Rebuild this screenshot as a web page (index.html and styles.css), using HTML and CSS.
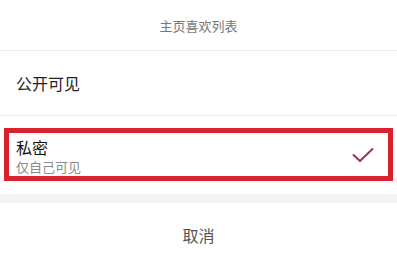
FILE: index.html
```html
<!DOCTYPE html>
<html lang="zh-CN">
<head>
    <meta charset="UTF-8">
    <meta name="viewport" content="width=device-width, initial-scale=1.0">
    <title>主页喜欢列表</title>
    <link rel="stylesheet" href="styles.css">
</head>
<body>
    <div class="sheet">
        <div class="sheet-title">主页喜欢列表</div>
        <div class="option option-public">公开可见</div>
        <div class="option option-private">
            <div class="option-text">
                <div class="option-name">私密</div>
                <div class="option-desc">仅自己可见</div>
            </div>
            <svg class="check" width="22" height="16" viewBox="0 0 22 16">
                <polyline points="1.5,8 8,14 20.5,2" fill="none" stroke="#9c2f58" stroke-width="2" stroke-linecap="round" stroke-linejoin="round"/>
            </svg>
            <!-- red highlight drawn over the selected row -->
            <div class="highlight"></div>
        </div>
        <div class="gap"></div>
        <div class="cancel">取消</div>
    </div>
</body>
</html>
```

FILE: styles.css
```css
body {
    margin: 0;
    padding: 0;
    background-color: #fff;
    font-family: "Noto Sans CJK SC", "Noto Sans", sans-serif;
}

.sheet {
    width: 397px;
    height: 266px;
    overflow: hidden;
    background-color: #fff;
}

.sheet-title {
    height: 50px;
    line-height: 52px;
    text-align: center;
    font-size: 13px;
    color: #777;
    border-bottom: 1px solid #ececec;
}

.option {
    padding-left: 16px;
}

.option-public {
    height: 64px;
    line-height: 64px;
    font-size: 16px;
    color: #222;
    border-bottom: 1px solid #eeeeee;
}

.option-private {
    position: relative;
    display: flex;
    align-items: center;
    justify-content: space-between;
    padding-top: 21px;
    padding-bottom: 18px;
}

.option-name {
    font-size: 16px;
    line-height: 20px;
    color: #111;
}

.option-desc {
    margin-top: 1px;
    font-size: 13px;
    line-height: 18px;
    color: #8a8a8a;
}

.check {
    display: block;
    margin-right: 23px;
    margin-top: -4px;
}

.highlight {
    position: absolute;
    top: 12px;
    left: 4px;
    right: 4px;
    bottom: 13px;
    border: 5px solid #d8222e;
}

.gap {
    height: 9px;
    background-color: #f3f3f3;
}

.cancel {
    height: 63px;
    line-height: 64px;
    text-align: center;
    font-size: 16px;
    color: #555;
}
```
